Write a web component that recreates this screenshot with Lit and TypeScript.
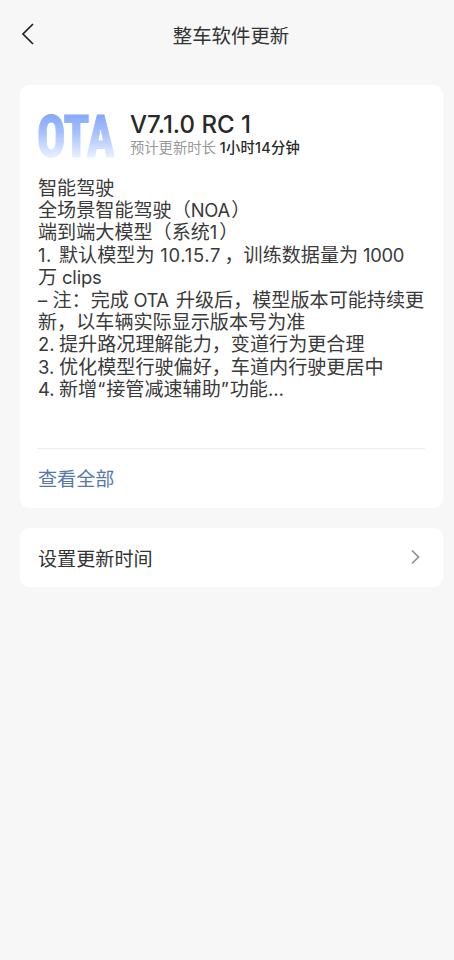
import { LitElement, html, css } from "lit";
import { customElement } from "lit/decorators.js";
import { styleMap } from "lit/directives/style-map.js";

// A run is Chinese text, or Latin text with its advance width and letter spacing.
type Run = string | [text: string, width: number, spacing?: number];

const NOTES: Run[][] = [
  ["智能驾驶"],
  ["全场景智能驾驶（", ["NOA", 40.5, -0.3], "）"],
  ["端到端大模型（系统", ["1", 9.5], "）"],
  [["1.", 21, 0.6], "默认模型为", [" 10.15.7", 70, 0.7], "，训练数据量为", [" 1000", 49, -0.3]],
  ["万", [" clips", 45, -0.2]],
  [["–", 14.5], "注：完成", [" OTA ", 47, -0.5], "升级后，模型版本可能持续更"],
  ["新，以车辆实际显示版本号为准"],
  [["2.", 21], "提升路况理解能力，变道行为更合理"],
  [["3.", 21], "优化模型行驶偏好，车道内行驶更居中"],
  [["4.", 21], "新增", ["“", 9], "接管减速辅助", ["”", 9], "功能", ["…", 19, 0.5]],
];

@customElement("app-root")
export class AppRoot extends LitElement {
  static styles = css`
    :host {
      display: block;
      box-sizing: border-box;
      height: 960px;
      overflow: hidden;
      background: #f7f7f7;
      color: #333;
      font-family: Inter, "Noto Sans CJK SC", sans-serif;
    }
    .bar {
      display: grid;
      grid-template-columns: 60px 1fr 52px;
      align-items: center;
      height: 71px;
      margin-bottom: 14px;
    }
    .back {
      display: block;
      margin: -4px 0 0 20px;
    }
    .title {
      margin: 0;
      padding-top: 1px;
      text-align: center;
      font-size: 19.4px;
      font-weight: 400;
      line-height: 28px;
    }
    .card {
      box-sizing: border-box;
      margin: 0 11px 20px 20px;
      padding: 0 18px;
      border-radius: 9px;
      background: #fff;
    }
    .update {
      height: 423px;
      padding-top: 24px;
    }
    .head {
      display: flex;
      gap: 15px;
      height: 66.6px;
    }
    .logo {
      display: block;
      margin-top: 2px;
      overflow: visible;
      font-family: Roboto, sans-serif;
      font-size: 60px;
      font-weight: 800;
      font-stretch: 75%;
    }
    .version {
      padding-top: 1px;
      font-size: 24px;
      font-weight: 500;
      line-height: 29px;
      white-space: nowrap;
      color: #292929;
    }
    .duration {
      font-size: 14.3px;
      line-height: 18px;
      color: #999;
      white-space: nowrap;
    }
    .time {
      color: #292929;
      font-weight: 500;
      letter-spacing: 0.25px;
    }
    .notes {
      height: 272.4px;
      font-size: 19.1px;
      color: #3a3a3a;
    }
    .note {
      display: flex;
      align-items: baseline;
      height: 22.42px;
      line-height: 22.42px;
      white-space: pre;
    }
    .cjk {
      flex: none;
      font-family: "Noto Sans CJK SC", sans-serif;
    }
    .latin {
      flex: none;
      font-size: 18.4px;
    }
    .more {
      height: 59px;
      border-top: 1px solid #ececec;
      line-height: 60px;
      font-size: 19.1px;
      color: #5677ad;
    }
    .schedule {
      display: flex;
      align-items: center;
      justify-content: space-between;
      height: 59px;
      font-size: 19.1px;
    }
    .chevron {
      display: block;
      margin: -1px 5px 0 0;
    }
  `;

  private renderRun(run: Run) {
    if (typeof run === "string") return html`<span class="cjk">${run}</span>`;
    const [text, width, spacing = 0] = run;
    return html`<span class="latin" style=${styleMap({ width: `${width}px`, letterSpacing: `${spacing}px` })}>${text}</span>`;
  }

  render() {
    return html`
      <header class="bar">
        <svg class="back" width="16" height="24" viewBox="0 0 16 24" fill="none" stroke="#222" stroke-width="1.7">
          <path d="M13 2 3 12 13 22" />
        </svg>
        <h1 class="title">整车软件更新</h1>
      </header>
      <section class="card update">
        <div class="head">
          <svg class="logo" width="77" height="50" viewBox="0 0 77 50">
            <defs>
              <linearGradient id="fade" x1="0" y1="0" x2="0" y2="48" gradientUnits="userSpaceOnUse">
                <stop offset="0" stop-color="#7fa4f8" />
                <stop offset="0.45" stop-color="#a5c0fc" />
                <stop offset="1" stop-color="#edf4ff" />
              </linearGradient>
            </defs>
            <g fill="url(#fade)" stroke="url(#fade)" stroke-width="1">
              <text x="-1" y="45.5" textLength="78" lengthAdjust="spacingAndGlyphs">OTA</text>
            </g>
          </svg>
          <div>
            <div class="version">V7.1.0 RC 1</div>
            <div class="duration">预计更新时长 <span class="time">1小时14分钟</span></div>
          </div>
        </div>
        <div class="notes">
          ${NOTES.map((line) => html`<div class="note">${line.map((run) => this.renderRun(run))}</div>`)}
        </div>
        <div class="more">查看全部</div>
      </section>
      <section class="card schedule">
        <span>设置更新时间</span>
        <svg class="chevron" width="10" height="16" viewBox="0 0 10 16" fill="none" stroke="#8c8c8c" stroke-width="1.6">
          <path d="M2 1.5 8.5 8 2 14.5" />
        </svg>
      </section>
    `;
  }
}
